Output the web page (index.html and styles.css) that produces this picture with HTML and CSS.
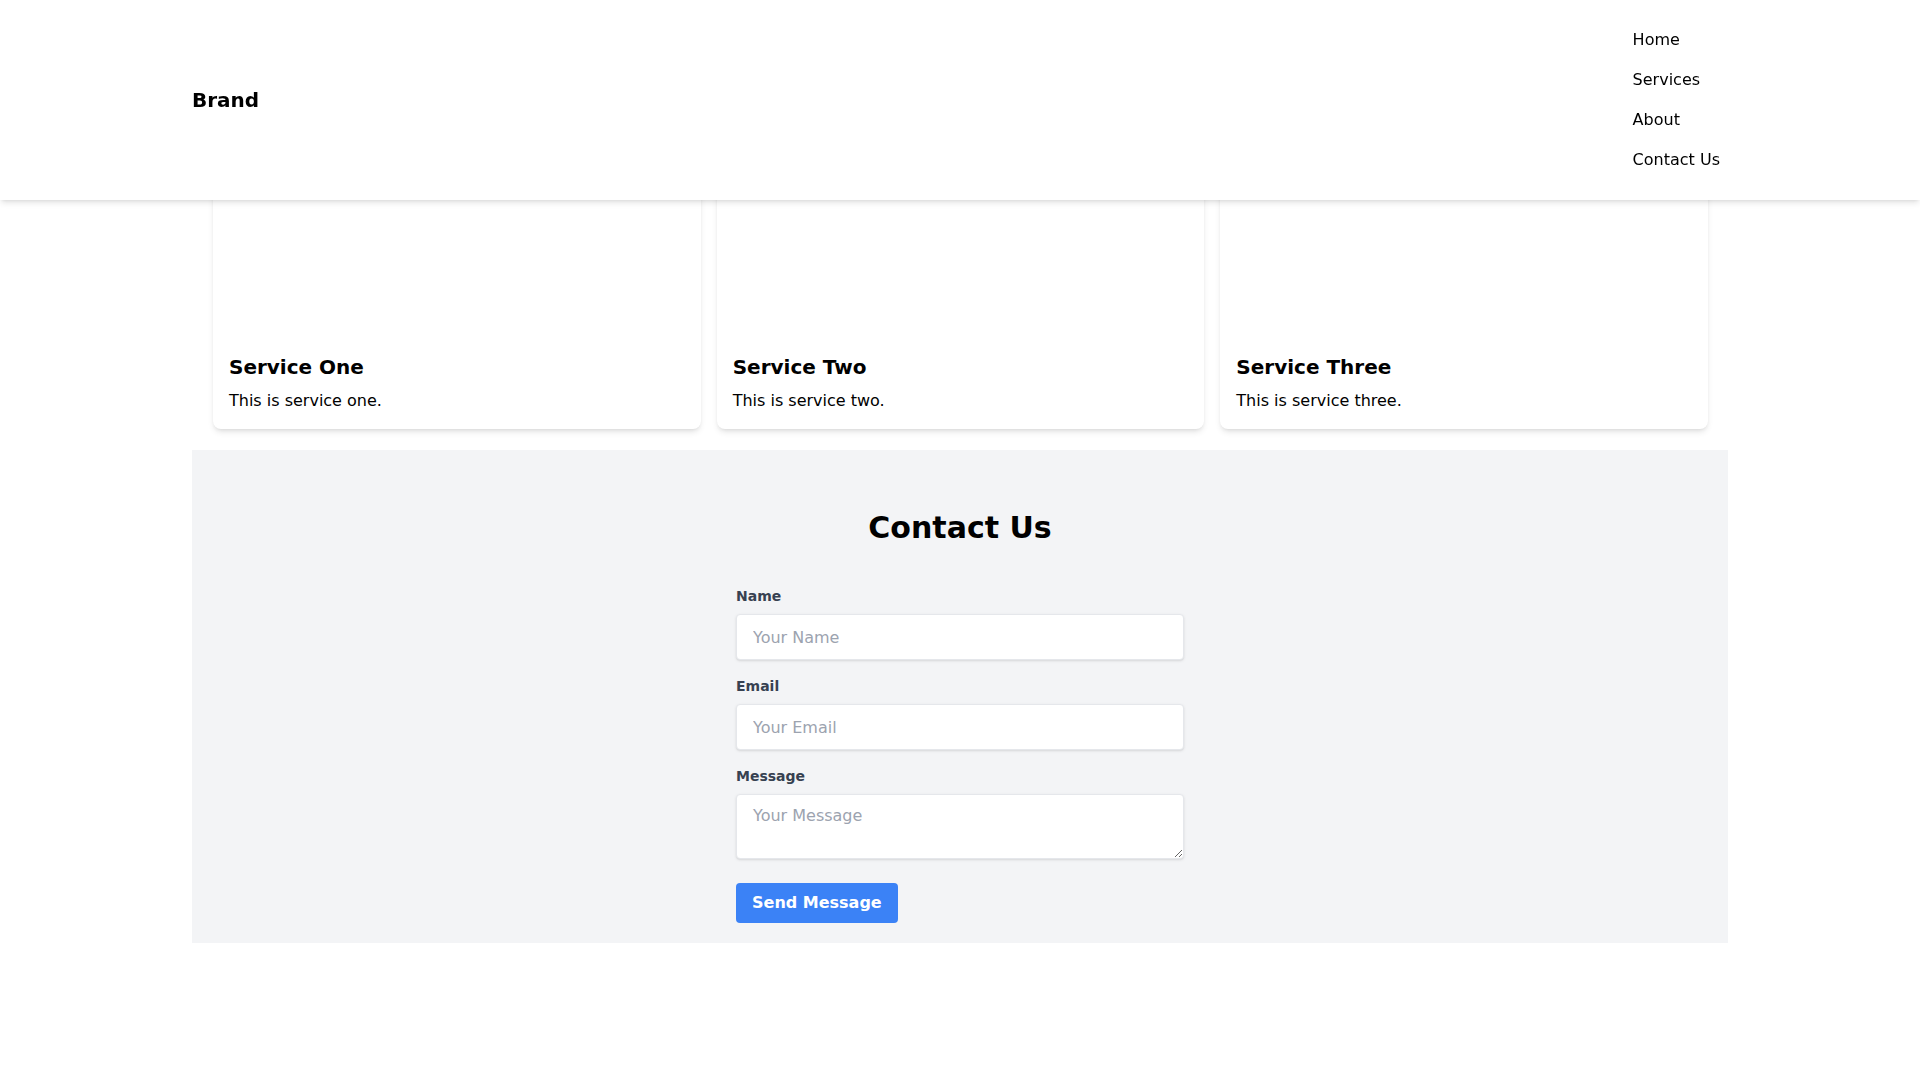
FILE: index.html
```html
<!DOCTYPE html>
<html lang="en">
  <head>
    <meta charset="UTF-8" />
    <meta name="viewport" content="width=device-width, initial-scale=1.0" />
    <title>Brand</title>
    <link rel="stylesheet" href="styles.css">
  </head>
  <body>
    <header class="site-header">
      <div class="container header-inner">
        <div class="brand">Brand</div>
        <nav class="nav">
          <a href="#">Home</a>
          <a href="#">Services</a>
          <a href="#">About</a>
          <a href="#">Contact Us</a>
        </nav>
      </div>
    </header>

    <main class="container">
      <section class="services">
        <div class="card">
          <div class="card-img"></div>
          <div class="card-body">
            <h3>Service One</h3>
            <p>This is service one.</p>
          </div>
        </div>
        <div class="card">
          <div class="card-img"></div>
          <div class="card-body">
            <h3>Service Two</h3>
            <p>This is service two.</p>
          </div>
        </div>
        <div class="card">
          <div class="card-img"></div>
          <div class="card-body">
            <h3>Service Three</h3>
            <p>This is service three.</p>
          </div>
        </div>
      </section>

      <section class="contact">
        <h2>Contact Us</h2>
        <form class="contact-form">
          <div class="field">
            <label for="name">Name</label>
            <input type="text" id="name" placeholder="Your Name" />
          </div>
          <div class="field">
            <label for="email">Email</label>
            <input type="email" id="email" placeholder="Your Email" />
          </div>
          <div class="field field-message">
            <label for="message">Message</label>
            <textarea id="message" placeholder="Your Message"></textarea>
          </div>
          <button type="button" class="btn-send">Send Message</button>
        </form>
      </section>
    </main>
  </body>
</html>
```

FILE: styles.css
```css
body {
  margin: 0;
  font-family: "DejaVu Sans", sans-serif;
  color: #000;
  background-color: #fff;
}
.container {
  max-width: 1536px;
  margin: 0 auto;
}
.site-header {
  position: fixed;
  top: 0;
  left: 0;
  right: 0;
  z-index: 10;
  background-color: #fff;
  box-shadow: 0 4px 6px -1px rgba(0, 0, 0, 0.1), 0 2px 4px -2px rgba(0, 0, 0, 0.1);
}
.header-inner {
  display: flex;
  justify-content: space-between;
  align-items: center;
  padding: 20px 0;
}
.brand {
  font-size: 20px;
  line-height: 28px;
  font-weight: bold;
}
.nav {
  display: flex;
  flex-direction: column;
}
.nav a {
  color: #000;
  text-decoration: none;
  font-size: 16px;
  line-height: 24px;
  padding: 8px;
}
.services {
  display: grid;
  grid-template-columns: repeat(3, 1fr);
  gap: 16px;
  padding: 145px 20px 21px 21px;
}
.card {
  background-color: #fff;
  border-radius: 8px;
  box-shadow: 0 4px 6px -1px rgba(0, 0, 0, 0.1), 0 2px 4px -2px rgba(0, 0, 0, 0.1);
  overflow: hidden;
}
.card-img {
  height: 192px;
}
.card-body {
  padding: 16px;
}
.card-body h3 {
  margin: 0 0 8px;
  font-size: 20px;
  line-height: 28px;
  font-weight: bold;
}
.card-body p {
  margin: 0;
  font-size: 16px;
  line-height: 24px;
}
.contact {
  background-color: #f3f4f6;
  padding: 60px 0 20px;
}
.contact h2 {
  margin: 0 0 40px;
  text-align: center;
  font-size: 30px;
  line-height: 36px;
  font-weight: bold;
}
.contact-form {
  max-width: 448px;
  margin: 0 auto;
}
.field {
  margin-bottom: 16px;
}
.field-message {
  margin-bottom: 24px;
}
.field label {
  display: block;
  margin-bottom: 8px;
  font-size: 14px;
  line-height: 20px;
  font-weight: bold;
  color: #374151;
}
.field input,
.field textarea {
  display: block;
  width: 100%;
  box-sizing: border-box;
  padding: 12px 16px;
  border: 1px solid #e5e7eb;
  border-radius: 4px;
  background-color: #fff;
  box-shadow: 0 1px 3px 0 rgba(0, 0, 0, 0.1), 0 1px 2px -1px rgba(0, 0, 0, 0.1);
  font-family: inherit;
  font-size: 16px;
  color: #374151;
}
.field input {
  height: 46px;
}
.field textarea {
  height: 65px;
  line-height: 20px;
  padding-top: 11px;
}
.field input::placeholder,
.field textarea::placeholder {
  color: #9ca3af;
}
.btn-send {
  padding: 8px 16px;
  border: none;
  border-radius: 4px;
  background-color: #3b82f6;
  color: #fff;
  font-family: inherit;
  font-size: 16px;
  line-height: 24px;
  font-weight: bold;
  cursor: pointer;
}
```
